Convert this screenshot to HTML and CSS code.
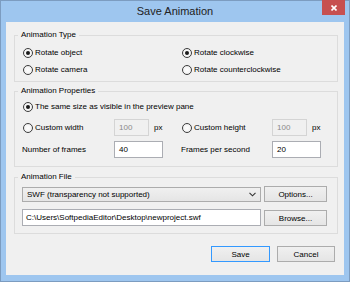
FILE: index.html
```html
<!DOCTYPE html>
<html lang="en">
<head>
    <meta charset="UTF-8">
    <meta name="viewport" content="width=device-width, initial-scale=1.0">
    <title>Save Animation</title>
    <link rel="stylesheet" href="styles.css">
</head>
<body>
    <div class="window">
        <div class="titlebar">
            <div class="title">Save Animation</div>
            <div class="close">
                <svg width="6" height="6" viewBox="0 0 6 6"><path d="M0.5 0.5 L5.5 5.5 M5.5 0.5 L0.5 5.5" stroke="#fff" stroke-width="1.6"/></svg>
            </div>
        </div>

        <div class="client">
            <fieldset class="group type-group">
                <legend>Animation Type</legend>
                <label class="radio checked"><span class="circle"></span>Rotate object</label>
                <label class="radio checked"><span class="circle"></span>Rotate clockwise</label>
                <label class="radio"><span class="circle"></span>Rotate camera</label>
                <label class="radio"><span class="circle"></span>Rotate counterclockwise</label>
            </fieldset>

            <fieldset class="group props-group">
                <legend>Animation Properties</legend>
                <label class="radio checked full"><span class="circle"></span>The same size as visible in the preview pane</label>

                <label class="radio row2"><span class="circle"></span>Custom width</label>
                <div class="cell row2"><span class="field disabled small">100</span><span class="unit">px</span></div>
                <label class="radio row2"><span class="circle"></span>Custom height</label>
                <div class="cell row2"><span class="field disabled small">100</span><span class="unit">px</span></div>

                <div class="text row3">Number of frames</div>
                <div class="cell row3"><span class="field wide">40</span></div>
                <div class="text row3">Frames per second</div>
                <div class="cell row3"><span class="field wide">20</span></div>
            </fieldset>

            <fieldset class="group file-group">
                <legend>Animation File</legend>
                <div class="combo">
                    <span>SWF (transparency not supported)</span>
                    <svg width="7" height="5" viewBox="0 0 7 5"><path d="M0.5 0.8 L3.5 3.8 L6.5 0.8" fill="none" stroke="#333" stroke-width="1.1"/></svg>
                </div>
                <div class="button">Options...</div>
                <div class="field path">C:\Users\SoftpediaEditor\Desktop\newproject.swf</div>
                <div class="button browse">Browse...</div>
            </fieldset>

            <div class="actions">
                <div class="button default">Save</div>
                <div class="button">Cancel</div>
            </div>
        </div>
    </div>
</body>
</html>
```

FILE: styles.css
```css
html, body {
    margin: 0;
    padding: 0;
}
body {
    width: 350px;
    height: 282px;
    font-family: "Liberation Sans", Arial, sans-serif;
    font-size: 8px;
    color: #000;
    overflow: hidden;
}
.window {
    box-sizing: border-box;
    width: 350px;
    height: 282px;
    background: #9ec6ef;
    border: 1px solid #7c9cc0;
}
.titlebar {
    display: flex;
    height: 21px;
}
.title {
    flex: 1;
    padding-left: 27px;
    text-align: center;
    font-size: 11px;
    line-height: 21px;
    color: #222;
}
.close {
    width: 23px;
    height: 15px;
    margin-top: -1px;
    margin-right: 4px;
    background: #c75050;
    display: flex;
    align-items: center;
    justify-content: center;
}
.client {
    box-sizing: border-box;
    width: 338px;
    height: 253px;
    margin-left: 5px;
    padding: 8px 6px 0 8px;
    background: #f0f0f0;
}
.group {
    margin: 0;
    border: 1px solid #dcdcdc;
    min-width: 0;
}
.group legend {
    margin-left: -4px;
    padding: 0 3px;
    line-height: 10px;
    height: 10px;
}
.type-group {
    display: grid;
    grid-template-columns: 159px 1fr;
    grid-auto-rows: 17px;
    padding: 4px 6px 3px 7px;
}
.props-group {
    margin-top: 4px;
    display: grid;
    grid-template-columns: 92px 67px 91px 1fr;
    grid-template-rows: 17px 17px 17px;
    row-gap: 4px;
    padding: 2px 6px 9px 7px;
}
.file-group {
    margin-top: 5px;
    display: grid;
    grid-template-columns: 239px 63px;
    grid-template-rows: 16px 17px;
    column-gap: 3px;
    row-gap: 7px;
    padding: 4px 9px 7px 7px;
}
.radio {
    display: flex;
    align-items: center;
}
.radio .circle {
    box-sizing: border-box;
    width: 10px;
    height: 10px;
    margin-left: 1px;
    margin-right: 2px;
    border: 1px solid #3c3c3c;
    border-radius: 50%;
    background: radial-gradient(circle, #fff 0%, #f4f4f4 60%, #e2e2e2 100%);
    display: flex;
    align-items: center;
    justify-content: center;
}
.radio.checked .circle::after {
    content: "";
    width: 4px;
    height: 4px;
    border-radius: 50%;
    background: #1a1a1a;
}
.full {
    grid-column: 1 / -1;
}
.row3 {
    margin-top: 1px;
}
.text {
    display: flex;
    align-items: center;
}
.cell {
    display: flex;
    align-items: center;
}
.field {
    box-sizing: border-box;
    height: 17px;
    padding-left: 4px;
    background: #fff;
    border: 1px solid #abadb3;
    display: flex;
    align-items: center;
    white-space: nowrap;
    overflow: hidden;
}
.field.disabled {
    background: #f0f0f0;
    border-color: #d4d4d4;
    color: #8a8a8a;
}
.field.small {
    width: 35px;
}
.field.wide {
    width: 49px;
}
.unit {
    margin-left: 5px;
}
.field.path {
    padding-left: 3px;
    width: 239px;
}
.combo {
    box-sizing: border-box;
    height: 15px;
    margin-top: 1px;
    padding: 0 4px 0 4px;
    display: flex;
    align-items: center;
    justify-content: space-between;
    border: 1px solid #acacac;
    background: linear-gradient(#f0f0f0, #e5e5e5);
}
.button {
    box-sizing: border-box;
    height: 16px;
    display: flex;
    align-items: center;
    justify-content: center;
    border: 1px solid #acacac;
    background: linear-gradient(#f0f0f0, #e5e5e5);
}
.button.browse {
    margin-top: 1px;
}
.button.default {
    border-color: #3399ff;
}
.actions {
    display: flex;
    justify-content: flex-end;
    gap: 7px;
    margin-top: 12px;
    padding-right: 3px;
}
.actions .button {
    width: 59px;
}
.actions .button:last-child {
    width: 58px;
}
```
